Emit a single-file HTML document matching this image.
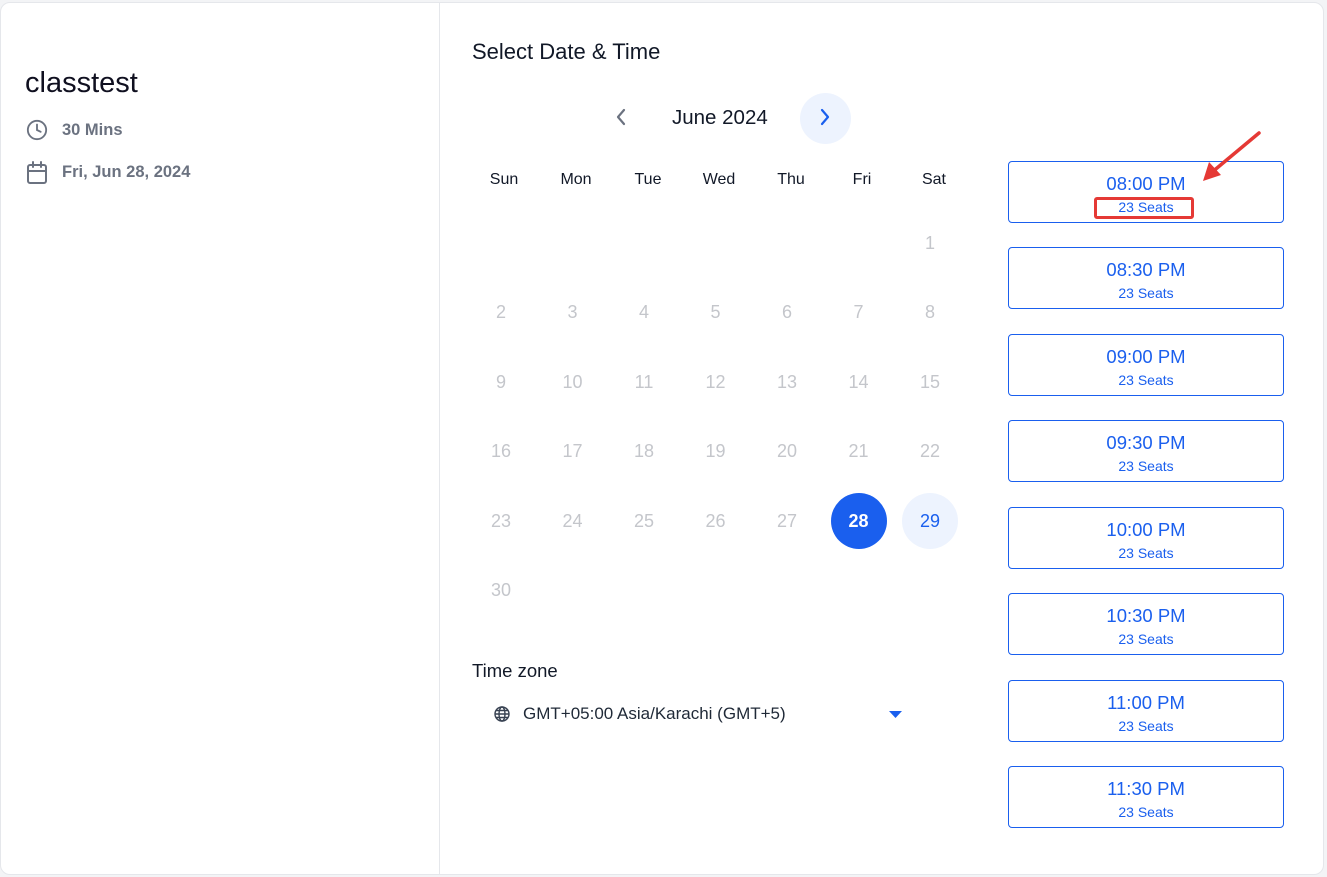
<!DOCTYPE html>
<html><head><meta charset="utf-8"><style>
*{margin:0;padding:0;box-sizing:border-box}
body{width:1327px;height:877px;background:#f3f4f6;font-family:"Liberation Sans",sans-serif;position:relative;overflow:hidden}
.card{position:absolute;left:0;top:2px;width:1324px;height:873px;background:#fff;border:1px solid #e5e7eb;border-radius:10px}
.div{position:absolute;left:439px;top:2px;width:1px;height:873px;background:#e5e7eb}
.a{position:absolute;white-space:nowrap}
.d{position:absolute;width:56px;height:56px;line-height:56px;text-align:center;font-size:18px;color:#c4c6cb;margin-left:-28px;margin-top:-28px;border-radius:50%}
.h{position:absolute;width:60px;text-align:center;margin-left:-30px;font-size:16px;color:#111827;top:171px}
.s{position:absolute;left:1008px;width:276px;height:62px;border:1px solid #1a5fee;border-radius:4px;text-align:center;color:#1a5fee}
.s b{display:block;font-weight:normal;font-size:18.5px;margin-top:12px;line-height:20px}
.s i{display:block;font-style:normal;font-size:14px;margin-top:5px;line-height:16px}
</style></head><body>
<div class="card"></div><div class="div"></div>
<div class="a" style="left:25px;top:67px;font-size:29px;color:#0f0f1f">classtest</div>
<svg class="a" style="left:26px;top:119px" width="22" height="22" viewBox="0 0 24 24" fill="none" stroke="#6b7280" stroke-width="2" stroke-linecap="round"><circle cx="12" cy="12" r="10"/><path d="M12 6v6l4 2"/></svg>
<div class="a" style="left:62px;top:121px;font-size:16.5px;color:#6b7280;font-weight:bold">30 Mins</div>
<svg class="a" style="left:26px;top:161px" width="22" height="24" viewBox="0 0 22 24" fill="none" stroke="#6b7280" stroke-width="2" stroke-linecap="round"><rect x="2" y="4" width="18" height="18" rx="2"/><path d="M2 10h18M7 1v5M15 1v5"/></svg>
<div class="a" style="left:62px;top:163px;font-size:16.5px;color:#6b7280;font-weight:bold">Fri, Jun 28, 2024</div>

<div class="a" style="left:472px;top:39px;font-size:22px;color:#111827">Select Date &amp; Time</div>
<svg class="a" style="left:612px;top:107px" width="18" height="20" viewBox="0 0 18 20" fill="none" stroke="#6b7280" stroke-width="2.2" stroke-linecap="round" stroke-linejoin="round"><path d="M12 3l-6 7 6 7"/></svg>
<div class="a" style="left:672px;top:106px;font-size:20.5px;color:#111827">June 2024</div>
<div class="a" style="left:800px;top:93px;width:51px;height:51px;border-radius:50%;background:#edf3fe"></div>
<svg class="a" style="left:816px;top:107px" width="18" height="20" viewBox="0 0 18 20" fill="none" stroke="#1a5fee" stroke-width="2.2" stroke-linecap="round" stroke-linejoin="round"><path d="M6 3l6 7-6 7"/></svg>

<div class="h" style="left:504px">Sun</div><div class="h" style="left:576px">Mon</div><div class="h" style="left:648px">Tue</div><div class="h" style="left:719px">Wed</div><div class="h" style="left:791px">Thu</div><div class="h" style="left:862px">Fri</div><div class="h" style="left:934px">Sat</div>

<div class="d" style="left:930px;top:243px">1</div>
<div class="d" style="left:501px;top:312px">2</div><div class="d" style="left:572.5px;top:312px">3</div><div class="d" style="left:644px;top:312px">4</div><div class="d" style="left:715.5px;top:312px">5</div><div class="d" style="left:787px;top:312px">6</div><div class="d" style="left:858.5px;top:312px">7</div><div class="d" style="left:930px;top:312px">8</div>
<div class="d" style="left:501px;top:382px">9</div><div class="d" style="left:572.5px;top:382px">10</div><div class="d" style="left:644px;top:382px">11</div><div class="d" style="left:715.5px;top:382px">12</div><div class="d" style="left:787px;top:382px">13</div><div class="d" style="left:858.5px;top:382px">14</div><div class="d" style="left:930px;top:382px">15</div>
<div class="d" style="left:501px;top:451px">16</div><div class="d" style="left:572.5px;top:451px">17</div><div class="d" style="left:644px;top:451px">18</div><div class="d" style="left:715.5px;top:451px">19</div><div class="d" style="left:787px;top:451px">20</div><div class="d" style="left:858.5px;top:451px">21</div><div class="d" style="left:930px;top:451px">22</div>
<div class="d" style="left:501px;top:521px">23</div><div class="d" style="left:572.5px;top:521px">24</div><div class="d" style="left:644px;top:521px">25</div><div class="d" style="left:715.5px;top:521px">26</div><div class="d" style="left:787px;top:521px">27</div>
<div class="d" style="left:858.5px;top:521px;background:#1a5fee;color:#fff;font-weight:bold">28</div>
<div class="d" style="left:930px;top:521px;background:#edf3fe;color:#1a5fee">29</div>
<div class="d" style="left:501px;top:590px">30</div>

<div class="a" style="left:472px;top:660px;font-size:18.5px;color:#111827">Time zone</div>
<svg class="a" style="left:494px;top:706px" width="16" height="16" viewBox="0 0 16 16" fill="none" stroke="#374151" stroke-width="1.4"><circle cx="8" cy="8" r="7"/><ellipse cx="8" cy="8" rx="3" ry="7"/><path d="M1 8h14M2 4.5h12M2 11.5h12"/></svg>
<div class="a" style="left:523px;top:704px;font-size:17px;color:#1f2937">GMT+05:00 Asia/Karachi (GMT+5)</div>
<svg class="a" style="left:889px;top:711px" width="13" height="7" viewBox="0 0 13 7"><path d="M0 0h13L6.5 7z" fill="#1a5fee"/></svg>

<div class="s" style="top:161px"><b>08:00 PM</b><i>23 Seats</i></div>
<div class="s" style="top:247px"><b>08:30 PM</b><i>23 Seats</i></div>
<div class="s" style="top:334px"><b>09:00 PM</b><i>23 Seats</i></div>
<div class="s" style="top:420px"><b>09:30 PM</b><i>23 Seats</i></div>
<div class="s" style="top:507px"><b>10:00 PM</b><i>23 Seats</i></div>
<div class="s" style="top:593px"><b>10:30 PM</b><i>23 Seats</i></div>
<div class="s" style="top:680px"><b>11:00 PM</b><i>23 Seats</i></div>
<div class="s" style="top:766px"><b>11:30 PM</b><i>23 Seats</i></div>

<div class="a" style="left:1094px;top:197px;width:100px;height:22px;border:3px solid #e53935;border-radius:3px"></div>
<svg class="a" style="left:1195px;top:128px" width="72" height="60" viewBox="0 0 72 60"><path d="M64 5L16 45" stroke="#e53935" stroke-width="3.5" stroke-linecap="round"/><path d="M8 53L14 34L26 47z" fill="#e53935"/></svg>
</body></html>
